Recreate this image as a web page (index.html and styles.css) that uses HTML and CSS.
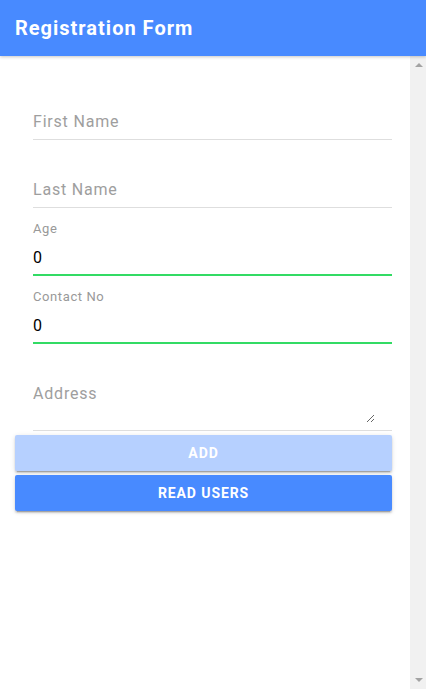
FILE: index.html
```html
<!DOCTYPE html>
<html lang="en">
<head>
<meta charset="utf-8">
<title>Registration Form</title>
<link rel="stylesheet" href="styles.css">
</head>
<body>
<header class="toolbar">
  <h1 class="title">Registration Form</h1>
</header>
<div class="viewport">
  <main class="content">
    <form class="form">
      <div class="field">
        <div class="label"></div>
        <input class="input" type="text" placeholder="First Name">
      </div>
      <div class="field">
        <div class="label"></div>
        <input class="input" type="text" placeholder="Last Name">
      </div>
      <div class="field valid">
        <div class="label">Age</div>
        <input class="input" type="text" value="0">
      </div>
      <div class="field valid">
        <div class="label">Contact No</div>
        <input class="input" type="text" value="0">
      </div>
      <div class="field tall">
        <div class="label"></div>
        <textarea class="textarea" placeholder="Address"></textarea>
      </div>
      <div class="buttons">
        <button class="btn disabled" type="button" disabled>Add</button>
        <button class="btn" type="button">Read Users</button>
      </div>
    </form>
  </main>
  <div class="scrollbar" aria-hidden="true">
    <span class="arrow up"></span>
    <span class="arrow down"></span>
  </div>
</div>
</body>
</html>
```

FILE: styles.css
```css
* { box-sizing: border-box; }
html, body {
  margin: 0;
  padding: 0;
  height: 100%;
  overflow: hidden;
  font-family: Roboto, "Noto Sans", sans-serif;
  background: #fff;
}
.toolbar {
  position: relative;
  z-index: 2;
  height: 56px;
  background: #488aff;
  display: flex;
  align-items: center;
  padding: 0 15px;
  box-shadow: 0 1px 3px rgba(0,0,0,.22);
}
.title {
  margin: 0;
  color: #fff;
  font-size: 20px;
  font-weight: 700;
  letter-spacing: 1px;
}
.viewport {
  display: flex;
  height: 633px;
}
.content {
  flex: 1;
  overflow: hidden;
}
.scrollbar {
  width: 16px;
  background: #f1f1f1;
  display: flex;
  flex-direction: column;
  justify-content: space-between;
  align-items: center;
  padding: 7px 0 7px 2px;
}
.arrow {
  width: 0;
  height: 0;
  border-left: 4px solid transparent;
  border-right: 4px solid transparent;
}
.arrow.up { border-bottom: 4px solid #a3a3a3; }
.arrow.down { border-top: 4px solid #a3a3a3; }
.form {
  padding-top: 16px;
}
.field {
  margin: 0 18px 0 33px;
  height: 68px;
  border-bottom: 1px solid #dedede;
  padding-top: 12px;
}
.field.valid {
  border-bottom: 2px solid #32db64;
}
.field.tall {
  height: 87px;
}
.label {
  height: 18px;
  font-size: 13px;
  line-height: 18px;
  color: #999;
  letter-spacing: 0.6px;
}
.input, .textarea {
  display: block;
  width: 100%;
  margin: 10px 0 0;
  padding: 0;
  border: 0;
  outline: none;
  background: transparent;
  font-family: Roboto, "Noto Sans", sans-serif;
  font-size: 16px;
  line-height: 20px;
  height: 20px;
  color: #000;
  letter-spacing: 0.8px;
}
.input::placeholder, .textarea::placeholder {
  color: #9e9e9e;
}
.textarea {
  width: 342px;
  height: 39px;
  resize: vertical;
  margin-top: 10px;
}
.buttons {
  display: flex;
  flex-direction: column;
  gap: 4px;
  margin: 4px 18px 0 15px;
}
.btn {
  height: 36px;
  border: 0;
  border-radius: 2px;
  background: #488aff;
  color: #fff;
  font-family: Roboto, "Noto Sans", sans-serif;
  font-size: 14px;
  font-weight: 700;
  letter-spacing: 0.9px;
  text-transform: uppercase;
  box-shadow: 0 2px 2px 0 rgba(0,0,0,.14), 0 3px 1px -2px rgba(0,0,0,.2), 0 1px 5px 0 rgba(0,0,0,.12);
}
.btn.disabled {
  background: #b6d0ff;
}
```
